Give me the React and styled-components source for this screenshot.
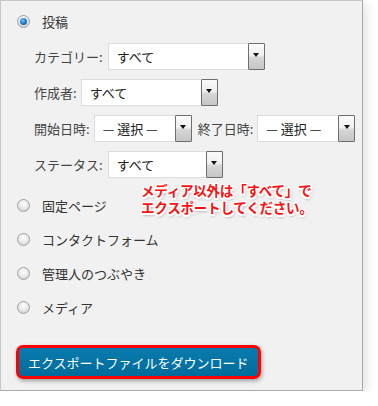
import React from "react";
import styled, { createGlobalStyle } from "styled-components";

const Global = createGlobalStyle`
  html, body { margin: 0; padding: 0; background: #ffffff; }
  body { font-family: "Noto Sans CJK JP", "Noto Sans", sans-serif; }
`;

const Panel = styled.div`
  position: relative;
  box-sizing: border-box;
  width: 363px;
  height: 391px;
  background: #f1f1f1;
  border: 1px solid #c8c8c8;
  border-right-color: #a8a8a8;
  border-bottom-color: #a8a8a8;
  box-shadow: 3px 3px 10px rgba(0, 0, 0, 0.12);
  padding: 3px 0 0 0;
  color: #333;
  font-size: 13px;
`;

const RadioRow = styled.label`
  display: flex;
  align-items: center;
  height: 34px;
  padding-left: 16px;
  gap: 12px;
  line-height: 1;
`;

const RadioDot = styled.span`
  box-sizing: border-box;
  width: 13px;
  height: 13px;
  border-radius: 50%;
  border: 1px solid #a0a0a0;
  background: radial-gradient(circle at 50% 35%, #ffffff 0%, #e6e6e6 55%, #c4c4c4 100%);
  display: flex;
  align-items: center;
  justify-content: center;
  flex: none;
  &::after {
    content: "";
    display: ${(p) => (p.$checked ? "block" : "none")};
    width: 7px;
    height: 7px;
    border-radius: 50%;
    background: radial-gradient(circle at 40% 35%, #6ec3ff 0%, #1a78c8 55%, #0a3f7a 100%);
  }
`;

const Filters = styled.div`
  padding-left: 33px;
  margin-bottom: 6px;
`;

const FilterRow = styled.div`
  display: flex;
  align-items: center;
  height: 36px;
`;

const Label = styled.span`
  color: #444;
  margin-right: ${(p) => p.$gap || 4}px;
  margin-left: ${(p) => p.$ml || 0}px;
  white-space: nowrap;
`;

const Select = styled.div`
  box-sizing: border-box;
  position: relative;
  display: flex;
  align-items: center;
  width: ${(p) => p.$w}px;
  height: 27px;
  background: #fff;
  border: 1px solid #dcdcdc;
  padding-left: 8px;
  color: #222;
  font-size: 13px;
  white-space: nowrap;
`;

const Arrow = styled.span`
  box-sizing: border-box;
  margin-left: auto;
  align-self: stretch;
  margin-top: -1px;
  margin-bottom: -1px;
  margin-right: -1px;
  width: 17px;
  border: 1px solid #6e6e6e;
  border-radius: 1px;
  background: linear-gradient(#fafafa 0%, #f0f0f0 45%, #d6d6d6 55%, #c6c6c6 100%);
  display: flex;
  justify-content: center;
  padding-top: 9px;
  &::after {
    content: "";
    width: 0;
    height: 0;
    border-left: 3.5px solid transparent;
    border-right: 3.5px solid transparent;
    border-top: 4px solid #111;
  }
`;

const ButtonWrap = styled.div`
  padding-left: 15px;
  margin-top: 21px;
`;

const ExportButton = styled.button`
  box-sizing: border-box;
  height: 34px;
  padding: 0 9px;
  border: 3px solid #ff0000;
  border-radius: 7px;
  background: linear-gradient(#0a7bae, #006b9a);
  color: #fff;
  font-family: "Noto Sans CJK JP", sans-serif;
  font-size: 13px;
  box-shadow: 1px 2px 4px rgba(0, 0, 0, 0.35);
  line-height: 1;
`;

const Callout = styled.div`
  position: absolute;
  left: 140px;
  top: 181px;
  color: #ff1010;
  font-weight: bold;
  font-size: 13.5px;
  line-height: 17px;
  letter-spacing: -0.2px;
  text-shadow:
    -1.5px -1.5px 0 #fff, 1.5px -1.5px 0 #fff, -1.5px 1.5px 0 #fff, 1.5px 1.5px 0 #fff,
    0 -1.5px 0 #fff, 0 1.5px 0 #fff, -1.5px 0 0 #fff, 1.5px 0 0 #fff,
    1px 2px 3px rgba(0, 0, 0, 0.5);
`;

const SelectBox = ({ w, children }) => (
  <Select $w={w}>
    {children}
    <Arrow />
  </Select>
);

const Radio = ({ checked, children }) => (
  <RadioRow>
    <RadioDot $checked={checked} />
    <span>{children}</span>
  </RadioRow>
);

export default function App() {
  return (
    <>
      <Global />
      <Panel>
        <Radio checked>投稿</Radio>
        <Filters>
          <FilterRow>
            <Label $gap={5}>カテゴリー:</Label>
            <SelectBox w={157}>すべて</SelectBox>
          </FilterRow>
          <FilterRow>
            <Label $gap={4}>作成者:</Label>
            <SelectBox w={137}>すべて</SelectBox>
          </FilterRow>
          <FilterRow>
            <Label $gap={4}>開始日時:</Label>
            <SelectBox w={98}>— 選択 —</SelectBox>
            <Label $gap={4} $ml={6}>終了日時:</Label>
            <SelectBox w={98}>— 選択 —</SelectBox>
          </FilterRow>
          <FilterRow>
            <Label $gap={5}>ステータス:</Label>
            <SelectBox w={115}>すべて</SelectBox>
          </FilterRow>
        </Filters>
        <Radio>固定ページ</Radio>
        <Radio>コンタクトフォーム</Radio>
        <Radio>管理人のつぶやき</Radio>
        <Radio>メディア</Radio>
        <ButtonWrap>
          <ExportButton>エクスポートファイルをダウンロード</ExportButton>
        </ButtonWrap>
        <Callout>
          メディア以外は「すべて」で
          <br />
          エクスポートしてください。
        </Callout>
      </Panel>
    </>
  );
}
